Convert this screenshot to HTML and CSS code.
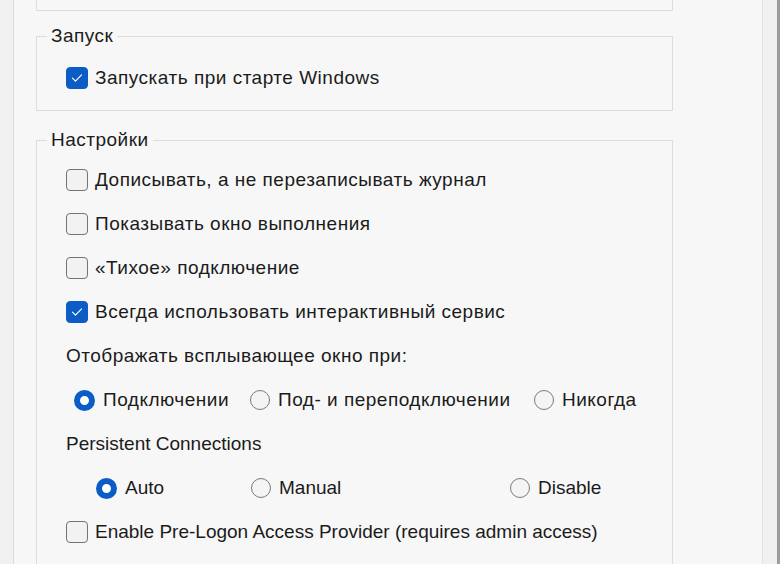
FILE: index.html
```html
<!DOCTYPE html>
<html lang="ru">
<head>
<meta charset="utf-8">
<title>Параметры</title>
<link rel="stylesheet" href="styles.css">
</head>
<body>
<div class="window">
  <div class="page">
    <div class="group group-top"></div>

    <fieldset class="group group-start">
      <legend class="ru">Запуск</legend>
      <div class="rows">
        <label class="row ru"><span class="box checked"><svg viewBox="0 0 22 22"><path d="M6 11.2 L9.3 14.4 L16 7.6"/></svg></span>Запускать при старте Windows</label>
      </div>
    </fieldset>

    <fieldset class="group group-settings">
      <legend class="ru">Настройки</legend>
      <div class="rows">
        <label class="row ru"><span class="box"></span>Дописывать, а не перезаписывать журнал</label>
        <label class="row ru"><span class="box"></span>Показывать окно выполнения</label>
        <label class="row ru"><span class="box"></span>«Тихое» подключение</label>
        <label class="row ru"><span class="box checked"><svg viewBox="0 0 22 22"><path d="M6 11.2 L9.3 14.4 L16 7.6"/></svg></span>Всегда использовать интерактивный сервис</label>
        <div class="row ru">Отображать всплывающее окно при:</div>
        <div class="row radios radios-popup ru">
          <label class="opt"><span class="radio on"></span>Подключении</label>
          <label class="opt"><span class="radio"></span>Под- и переподключении</label>
          <label class="opt"><span class="radio"></span>Никогда</label>
        </div>
        <div class="row">Persistent Connections</div>
        <div class="row radios radios-persist">
          <label class="opt"><span class="radio on"></span>Auto</label>
          <label class="opt"><span class="radio"></span>Manual</label>
          <label class="opt"><span class="radio"></span>Disable</label>
        </div>
        <label class="row"><span class="box"></span>Enable Pre-Logon Access Provider (requires admin access)</label>
      </div>
    </fieldset>
  </div>
  <div class="side"></div>
  <div class="edge"></div>
</div>
</body>
</html>
```

FILE: styles.css
```css
html, body {
  margin: 0;
  padding: 0;
}

body {
  background: #f0f0f0;
  font-family: "Liberation Sans", Arial, sans-serif;
  font-size: 19px;
  color: #1b1b1b;
}

.ru {
  letter-spacing: 0.5px;
}

.window {
  display: flex;
  height: 564px;
  overflow: hidden;
  background: #f0f0f0;
}

.page {
  margin-left: 13px;
  width: 748px;
  border-left: 1px solid #dadada;
  border-right: 1px solid #e2e2e2;
  background: #f7f7f7;
  display: flex;
  flex-direction: column;
  flex-shrink: 0;
}

.side {
  width: 14px;
  background: #f0f0f0;
  flex-shrink: 0;
}

.edge {
  width: 3px;
  background: #9c9c9c;
  flex-shrink: 0;
}

.group {
  flex-shrink: 0;
  margin: 0 0 0 22px;
  width: 635px;
  border: 1px solid #dcdcdc;
  padding: 0;
  min-width: 0;
  box-sizing: content-box;
}

.group legend {
  margin-left: 10px;
  padding: 0 4px;
  line-height: 20px;
  font-size: 19px;
}

.group-top {
  border-top: none;
  height: 10px;
  margin-bottom: 15px;
}

.group-start .rows {
  padding: 20px 0 20px 29px;
}

.group-settings {
  margin-top: 19px;
}

.group-settings .rows {
  padding: 18px 0 40px 29px;
}

.rows {
  display: flex;
  flex-direction: column;
  gap: 20px;
}

.row {
  display: flex;
  align-items: center;
  height: 24px;
  white-space: nowrap;
}

.box {
  width: 20px;
  height: 20px;
  border: 1px solid #747474;
  border-radius: 4px;
  background: #f2f2f2;
  margin-right: 7px;
  flex-shrink: 0;
  display: flex;
  align-items: center;
  justify-content: center;
}

.box.checked {
  background: #0b5cc4;
  border-color: #0b5cc4;
}

.box svg {
  width: 22px;
  height: 22px;
  fill: none;
  stroke: #fff;
  stroke-width: 1.3;
  stroke-linecap: round;
  stroke-linejoin: round;
}

.radios {
  display: grid;
}

.radios-popup {
  padding-left: 8px;
  grid-template-columns: 176px 284px auto;
}

.radios-persist {
  padding-left: 30px;
  grid-template-columns: 155px 259px auto;
}

.opt {
  display: flex;
  align-items: center;
}

.radio {
  width: 18px;
  height: 18px;
  border: 1.5px solid #7a7a7a;
  border-radius: 50%;
  background: #f4f4f4;
  margin-right: 8px;
  flex-shrink: 0;
}

.radio.on {
  width: 9px;
  height: 9px;
  border: 6px solid #0b5cc4;
  background: #fff;
}
```
